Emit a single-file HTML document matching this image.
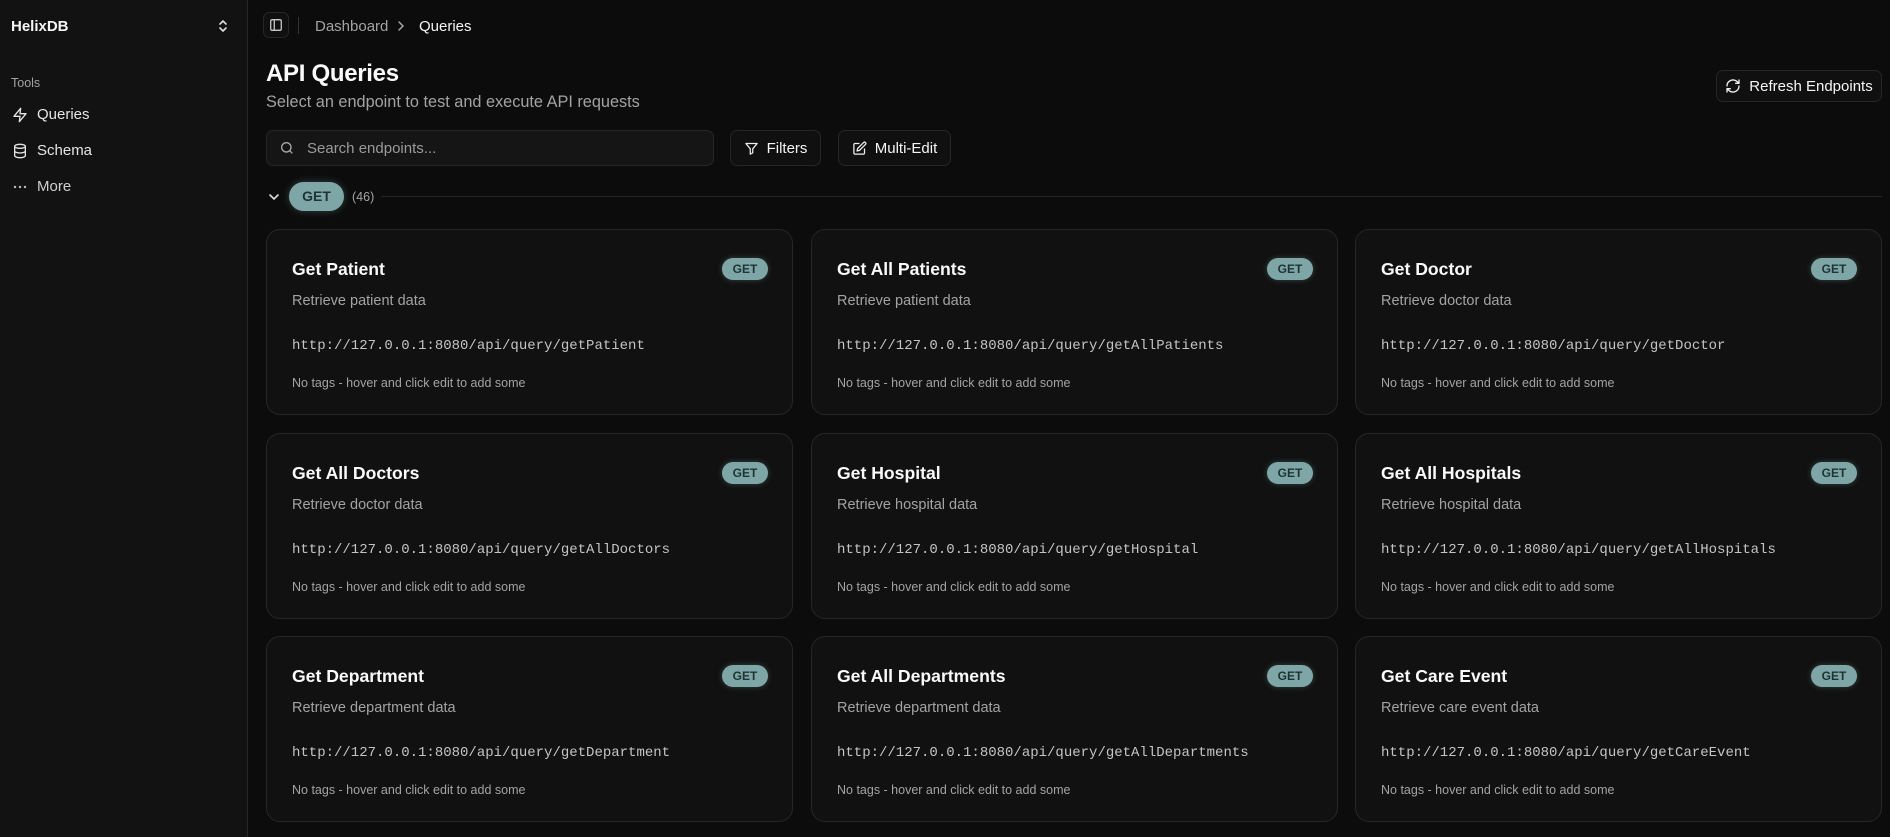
<!DOCTYPE html>
<html><head><meta charset="utf-8"><style>
*{box-sizing:border-box;margin:0;padding:0}
body{width:1890px;height:837px;overflow:hidden;background:#0c0c0c;font-family:"Liberation Sans",sans-serif;color:#fafafa;position:relative}
.side{position:absolute;left:0;top:0;width:248px;height:837px;background:#121212;border-right:1px solid #262626}
.abs{position:absolute;white-space:nowrap}
.nav{font-size:15px;color:#e5e5e5;display:flex;align-items:center;gap:9px;left:12px}
.btn{position:absolute;border:1px solid #262626;border-radius:7px;background:#101010;display:flex;align-items:center;justify-content:center;gap:8px;font-size:15px;color:#f5f5f5}
.card{position:absolute;width:527px;height:186px;border:1px solid #262626;border-radius:14px;background:#111}
.card .t{position:absolute;left:25px;top:29px;font-size:17.6px;font-weight:bold;color:#fafafa}
.card .b{position:absolute;right:24px;top:28px;width:46px;height:22px;border-radius:11px;background:#7fa6a6;color:#1e3434;font-size:12px;font-weight:bold;text-align:center;line-height:22px;box-shadow:0 0 6px rgba(127,166,166,.35)}
.card .d{position:absolute;left:25px;top:63px;font-size:14.5px;color:#a3a3a3}
.card .u{position:absolute;left:25px;top:108px;font-family:"Liberation Mono",monospace;font-size:14px;color:#c4c4c4}
.card .g{position:absolute;left:25px;top:146px;font-size:12.5px;color:#a3a3a3}
svg{display:block}
</style></head><body>
<div class="side">
<div class="abs" style="left:11px;top:18px;font-size:15px;font-weight:bold;color:#f5f5f5">HelixDB</div>
<svg class="abs" style="left:216px;top:18px" width="14" height="16" viewBox="0 0 14 16" fill="none" stroke="#ddd" stroke-width="1.6" stroke-linecap="round" stroke-linejoin="round"><path d="M4 6l3-3 3 3M4 10l3 3 3-3"/></svg>
<div class="abs" style="left:11px;top:76px;font-size:12.5px;color:#a3a3a3">Tools</div>
<div class="abs nav" style="top:106px"><svg width="16" height="16" viewBox="0 0 24 24" fill="none" stroke="#e5e5e5" stroke-width="2" stroke-linejoin="round"><path d="M13 2L3 14h9l-1 8 10-12h-9l1-8z"/></svg>Queries</div>
<div class="abs nav" style="top:142px"><svg width="16" height="16" viewBox="0 0 24 24" fill="none" stroke="#e5e5e5" stroke-width="2"><ellipse cx="12" cy="5" rx="8" ry="3"/><path d="M4 5v14c0 1.7 3.6 3 8 3s8-1.3 8-3V5M4 12c0 1.7 3.6 3 8 3s8-1.3 8-3"/></svg>Schema</div>
<div class="abs nav" style="top:178px;color:#cfcfcf"><svg width="16" height="16" viewBox="0 0 16 16" fill="#bbb"><circle cx="3" cy="8" r="1.2"/><circle cx="8" cy="8" r="1.2"/><circle cx="13" cy="8" r="1.2"/></svg>More</div>
</div>
<div class="btn" style="left:263px;top:12px;width:26px;height:26px;border-radius:6px"><svg width="14" height="14" viewBox="0 0 24 24" fill="none" stroke="#ddd" stroke-width="2"><rect x="3" y="3" width="18" height="18" rx="2"/><path d="M9 3v18"/></svg></div>
<div class="abs" style="left:298px;top:17px;width:1px;height:17px;background:#333"></div>
<div class="abs" style="left:315px;top:18px;font-size:15px;color:#a3a3a3">Dashboard</div>
<svg class="abs" style="left:396px;top:20px" width="10" height="12" viewBox="0 0 10 12" fill="none" stroke="#a3a3a3" stroke-width="1.5" stroke-linecap="round"><path d="M3 2l4 4-4 4"/></svg>
<div class="abs" style="left:419px;top:18px;font-size:15px;color:#f5f5f5">Queries</div>
<div class="abs" style="left:266px;top:60px;font-size:24px;font-weight:bold;letter-spacing:-0.3px">API Queries</div>
<div class="abs" style="left:266px;top:93px;font-size:16.3px;color:#a3a3a3">Select an endpoint to test and execute API requests</div>
<div class="btn" style="left:1716px;top:70px;width:166px;height:32px"><svg width="16" height="16" viewBox="0 0 24 24" fill="none" stroke="#eee" stroke-width="2" stroke-linecap="round" stroke-linejoin="round"><path d="M3 12a9 9 0 0 1 15-6.7L21 8M21 3v5h-5M21 12a9 9 0 0 1-15 6.7L3 16M3 21v-5h5"/></svg>Refresh Endpoints</div>
<div class="btn" style="left:266px;top:130px;width:448px;height:36px;justify-content:flex-start;padding-left:12px;gap:12px;background:#151515;color:#9a9a9a"><svg width="16" height="16" viewBox="0 0 24 24" fill="none" stroke="#aaa" stroke-width="2"><circle cx="11" cy="11" r="7"/><path d="M20 20l-4-4"/></svg>Search endpoints...</div>
<div class="btn" style="left:730px;top:130px;width:91px;height:36px"><svg width="15" height="15" viewBox="0 0 24 24" fill="none" stroke="#eee" stroke-width="2" stroke-linejoin="round"><path d="M3 4h18l-7 8.5V19l-4 2v-8.5z"/></svg>Filters</div>
<div class="btn" style="left:838px;top:130px;width:113px;height:36px"><svg width="15" height="15" viewBox="0 0 24 24" fill="none" stroke="#eee" stroke-width="2" stroke-linejoin="round"><path d="M12 4H5a2 2 0 0 0-2 2v13a2 2 0 0 0 2 2h13a2 2 0 0 0 2-2v-7"/><path d="M18.5 2.5a2.1 2.1 0 0 1 3 3L12 15l-4 1 1-4z"/></svg>Multi-Edit</div>
<svg class="abs" style="left:268px;top:191px" width="12" height="12" viewBox="0 0 12 12" fill="none" stroke="#ddd" stroke-width="1.6" stroke-linecap="round"><path d="M2 4l4 4 4-4"/></svg>
<div class="abs" style="left:289px;top:182px;width:55px;height:29px;border-radius:15px;background:#7fa6a6;color:#1e3434;font-size:14px;font-weight:bold;text-align:center;line-height:29px;box-shadow:0 0 8px rgba(127,166,166,.35)">GET</div>
<div class="abs" style="left:352px;top:190px;font-size:12.5px;color:#a3a3a3">(46)</div>
<div class="abs" style="left:381px;top:196px;width:1501px;height:1px;background:#262626"></div>

<div class="card" style="left:266px;top:229px"><div class="t">Get Patient</div><div class="b">GET</div><div class="d">Retrieve patient data</div><div class="u">http://127.0.0.1:8080/api/query/getPatient</div><div class="g">No tags - hover and click edit to add some</div></div>
<div class="card" style="left:811px;top:229px"><div class="t">Get All Patients</div><div class="b">GET</div><div class="d">Retrieve patient data</div><div class="u">http://127.0.0.1:8080/api/query/getAllPatients</div><div class="g">No tags - hover and click edit to add some</div></div>
<div class="card" style="left:1355px;top:229px"><div class="t">Get Doctor</div><div class="b">GET</div><div class="d">Retrieve doctor data</div><div class="u">http://127.0.0.1:8080/api/query/getDoctor</div><div class="g">No tags - hover and click edit to add some</div></div>
<div class="card" style="left:266px;top:433px"><div class="t">Get All Doctors</div><div class="b">GET</div><div class="d">Retrieve doctor data</div><div class="u">http://127.0.0.1:8080/api/query/getAllDoctors</div><div class="g">No tags - hover and click edit to add some</div></div>
<div class="card" style="left:811px;top:433px"><div class="t">Get Hospital</div><div class="b">GET</div><div class="d">Retrieve hospital data</div><div class="u">http://127.0.0.1:8080/api/query/getHospital</div><div class="g">No tags - hover and click edit to add some</div></div>
<div class="card" style="left:1355px;top:433px"><div class="t">Get All Hospitals</div><div class="b">GET</div><div class="d">Retrieve hospital data</div><div class="u">http://127.0.0.1:8080/api/query/getAllHospitals</div><div class="g">No tags - hover and click edit to add some</div></div>
<div class="card" style="left:266px;top:636px"><div class="t">Get Department</div><div class="b">GET</div><div class="d">Retrieve department data</div><div class="u">http://127.0.0.1:8080/api/query/getDepartment</div><div class="g">No tags - hover and click edit to add some</div></div>
<div class="card" style="left:811px;top:636px"><div class="t">Get All Departments</div><div class="b">GET</div><div class="d">Retrieve department data</div><div class="u">http://127.0.0.1:8080/api/query/getAllDepartments</div><div class="g">No tags - hover and click edit to add some</div></div>
<div class="card" style="left:1355px;top:636px"><div class="t">Get Care Event</div><div class="b">GET</div><div class="d">Retrieve care event data</div><div class="u">http://127.0.0.1:8080/api/query/getCareEvent</div><div class="g">No tags - hover and click edit to add some</div></div>
</body></html>
